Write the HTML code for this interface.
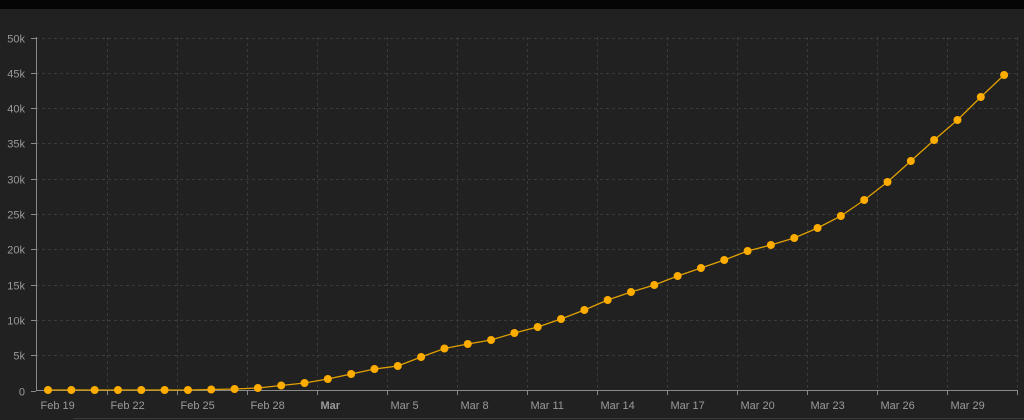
<!DOCTYPE html>
<html><head><meta charset="utf-8"><style>
html,body{margin:0;padding:0;background:#212121;width:1024px;height:420px;overflow:hidden}
svg{display:block}
text{font-family:"Liberation Sans",sans-serif;font-size:11px;fill:#9a9a9a}
</style></head><body>
<svg id="s" width="1024" height="420" xmlns="http://www.w3.org/2000/svg">
<rect x="0" y="0" width="1024" height="420" fill="#212121"/>
<rect x="0" y="0" width="1024" height="9" fill="#050505"/>
<line x1="73" y1="418.5" x2="1024" y2="418.5" stroke="#3a3a3a" stroke-width="1"/>
<g id="grid" stroke="#3a3a3a" stroke-dasharray="3,3" stroke-width="1"></g>
<g id="ax" stroke="#8a8a8a" stroke-width="1"></g>
<g id="lbl"></g>
<polyline id="pl" fill="none" stroke="#e0a000" stroke-width="1.3"/>
<g id="dots" fill="#ffac00"></g>
</svg>
<script>
var NS="http://www.w3.org/2000/svg";
function el(t,a,p,txt){var e=document.createElementNS(NS,t);for(var k in a)e.setAttribute(k,a[k]);if(txt)e.textContent=txt;document.getElementById(p).appendChild(e);return e;}
var y0=390.5,step=35.3;
var yl=["0","5k","10k","15k","20k","25k","30k","35k","40k","45k","50k"];
for(var i=0;i<=10;i++){var y=Math.round(y0-i*step)+0.5;
 if(i>0)el("line",{x1:36,y1:y,x2:1017,y2:y},"grid");
 el("line",{x1:31,y1:y,x2:36,y2:y},"ax");
 el("text",{x:25,y:y+4,"text-anchor":"end"},"lbl",yl[i]);}
el("line",{x1:36.5,y1:37,x2:36.5,y2:391},"ax");
el("line",{x1:36,y1:390.5,x2:1017,y2:390.5},"ax");
var xl=["Feb 19","Feb 22","Feb 25","Feb 28","Mar","Mar 5","Mar 8","Mar 11","Mar 14","Mar 17","Mar 20","Mar 23","Mar 26","Mar 29"];
for(var k=0;k<=14;k++){var x=Math.round(36.5+k*70.04)+0.5;
 if(k>0){el("line",{x1:x,y1:37,x2:x,y2:390},"grid");el("line",{x1:x,y1:390,x2:x,y2:395},"ax");}
 if(k<14){var t=el("text",{x:x+3,y:409},"lbl",xl[k]);if(xl[k]=="Mar"){t.setAttribute("font-weight","bold");t.setAttribute("fill","#b5b5b5");}}}
var ys=[390,390,390,390,390,390,390,389.5,389,388,385.5,383,379,374,369,366,357,348.5,344,340,333,327,319,310,300,292,285,276,268,260,251,245,238,228,216,200,182,161,140,120,97,75];
var pts=[];
for(var j=0;j<ys.length;j++){var x=48+j*23.32;pts.push(x.toFixed(1)+","+ys[j]);el("circle",{cx:x,cy:ys[j],r:4},"dots");}
document.getElementById("pl").setAttribute("points",pts.join(" "));
</script>
</body></html>
